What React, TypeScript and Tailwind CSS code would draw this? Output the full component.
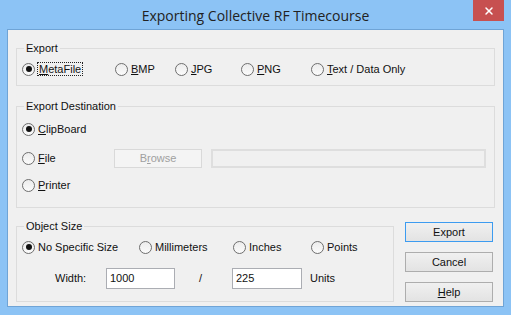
import React from 'react';
import { X } from 'lucide-react';

const Radio = ({ checked }: { checked?: boolean }) => (
  <span className="w-[13px] h-[13px] shrink-0 rounded-full border border-[#6e6e6e] bg-gradient-to-b from-[#ececec] to-[#fbfbfb] flex items-center justify-center">
    {checked && <span className="w-[6px] h-[6px] rounded-full bg-[#111]" />}
  </span>
);

const Opt = ({ label, checked, width, focus }: { label: React.ReactNode; checked?: boolean; width?: string; focus?: boolean }) => (
  <div className={`flex items-center gap-[3px] h-[14px] ${width ?? ''}`}>
    <Radio checked={checked} />
    <span className={focus ? 'outline-1 outline-dotted outline-[#222] leading-[12px] px-px' : 'leading-[12px]'}>{label}</span>
  </div>
);

const U = ({ children }: { children: React.ReactNode }) => <span className="underline underline-offset-[1px]">{children}</span>;

const Btn = ({ children, def }: { children: React.ReactNode; def?: boolean }) => (
  <button
    className={`w-[88px] h-[20px] flex items-center justify-center bg-gradient-to-b from-[#f0f0f0] to-[#e3e3e3] border ${
      def ? 'border-[#3c9bf0]' : 'border-[#adadad]'
    } text-[#111]`}
  >
    {children}
  </button>
);

export default function App() {
  return (
    <div
      className="w-[511px] h-[315px] bg-[#8cc3f5] flex flex-col text-[11px] text-[#111]"
      style={{ fontFamily: '"Liberation Sans", Arial, sans-serif' }}
    >
      {/* Title bar */}
      <div className="h-[29px] grid grid-cols-[1fr_auto_1fr] shrink-0">
        <div />
        <div className="text-[14px] text-[#222] leading-[29px] pt-[1px]" style={{ fontFamily: '"Open Sans", "Noto Sans", sans-serif' }}>
          Exporting Collective RF Timecourse
        </div>
        <div className="flex justify-end pr-[7px]">
          <div className="w-[31px] h-[21px] bg-[#c75050] flex items-center justify-center">
            <X className="w-[12px] h-[12px] text-white" strokeWidth={3} />
          </div>
        </div>
      </div>

      {/* Client */}
      <div className="mx-[7px] h-[278px] border border-[#6fa4d6] bg-[#f0f0f0] px-[8px]">
        {/* Export */}
        <fieldset className="mt-[11px] border border-[#dcdcdc] px-[5px] pt-[7px] pb-[9px]">
          <legend className="ml-[2px] px-[2px] leading-[14px]">Export</legend>
          <div className="flex">
            <Opt checked focus width="w-[93px]" label={<><U>M</U>etaFile</>} />
            <Opt width="w-[60px]" label={<><U>B</U>MP</>} />
            <Opt width="w-[66px]" label={<><U>J</U>PG</>} />
            <Opt width="w-[70px]" label={<><U>P</U>NG</>} />
            <Opt label={<><U>T</U>ext / Data Only</>} />
          </div>
        </fieldset>

        {/* Export Destination */}
        <fieldset className="mt-[13px] border border-[#dcdcdc] pl-[5px] pr-[8px] pt-[7px] pb-[13px]">
          <legend className="ml-[2px] px-[2px] leading-[14px]">Export Destination</legend>
          <div className="h-[18px] flex items-center">
            <Opt checked label={<><U>C</U>lipBoard</>} />
          </div>
          <div className="h-[18px] mt-[11px] flex items-center">
            <Opt width="w-[92px]" label={<><U>F</U>ile</>} />
            <div className="w-[88px] h-[19px] border border-[#d9d9d9] bg-[#f4f4f4] text-[#a0a0a0] flex items-center justify-center">
              B<span className="underline">r</span>owse
            </div>
            <div className="ml-[9px] flex-1 h-[19px] border-2 border-[#dedede] bg-[#f0f0f0]" />
          </div>
          <div className="h-[18px] mt-[9px] flex items-center">
            <Opt label={<><U>P</U>rinter</>} />
          </div>
        </fieldset>

        {/* Object Size + buttons */}
        <div className="mt-[11px] flex">
          <fieldset className="w-[378px] border border-[#dcdcdc] px-[5px] pt-[7px] pb-[7px]">
            <legend className="ml-[2px] px-[2px] leading-[14px]">Object Size</legend>
            <div className="flex">
              <Opt checked width="w-[117px]" label="No Specific Size" />
              <Opt width="w-[94px]" label="Millimeters" />
              <Opt width="w-[78px]" label="Inches" />
              <Opt label="Points" />
            </div>
            <div className="mt-[14px] flex items-center h-[21px]">
              <span className="ml-[33px] w-[51px]">Width:</span>
              <div className="w-[69px] h-[21px] bg-white border border-[#abadb3] px-[3px] flex items-center">1000</div>
              <span className="ml-[24px] w-[33px]">/</span>
              <div className="w-[70px] h-[21px] bg-white border border-[#abadb3] px-[3px] flex items-center">225</div>
              <span className="ml-[8px]">Units</span>
            </div>
          </fieldset>
          <div className="ml-[11px] mt-[3px] flex flex-col gap-[10px]">
            <Btn def>Export</Btn>
            <Btn>Cancel</Btn>
            <Btn>
              <U>H</U>elp
            </Btn>
          </div>
        </div>
      </div>
    </div>
  );
}
